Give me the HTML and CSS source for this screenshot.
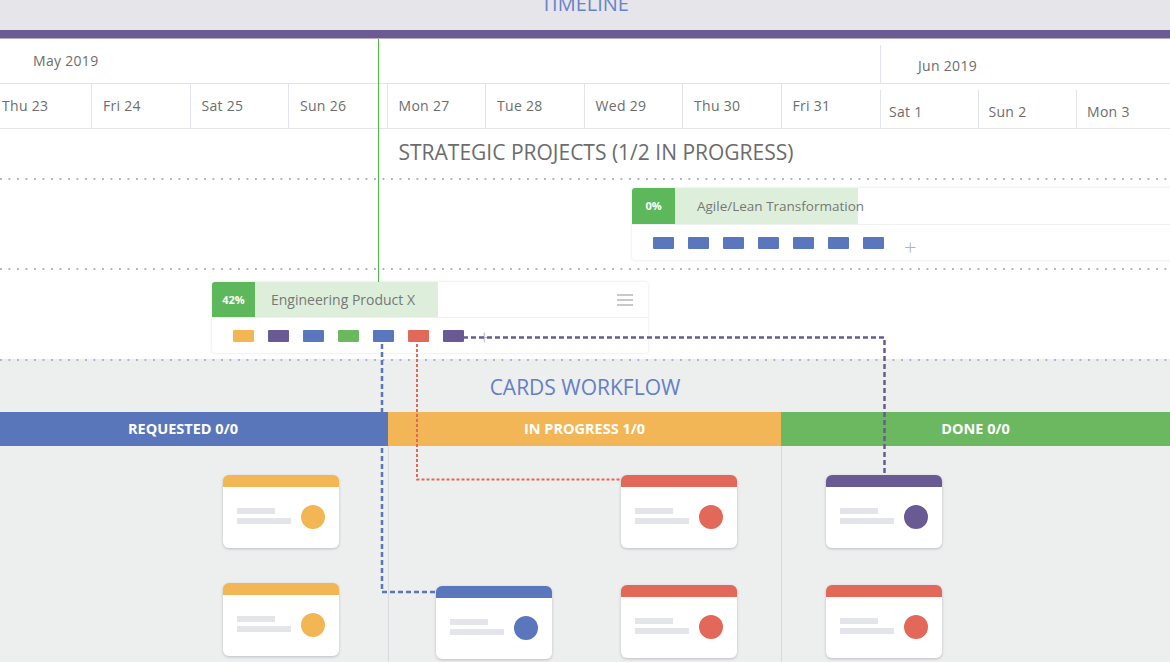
FILE: index.html
```html
<!DOCTYPE html>
<html lang="en">
<head>
<meta charset="utf-8">
<title>Timeline</title>
<link rel="stylesheet" href="styles.css">
</head>
<body>
<div class="page">
  <header class="topbar"><div class="topbar-title">TIMELINE</div></header>
  <div class="accent"></div>

  <section class="timeline">
    <div class="today"></div>
    <div class="cal">
      <div class="month may">
        <div class="mlabel">May 2019</div>
        <div class="days">
          <div class="day first">Thu 23</div>
          <div class="day">Fri 24</div>
          <div class="day">Sat 25</div>
          <div class="day">Sun 26</div>
          <div class="day">Mon 27</div>
          <div class="day">Tue 28</div>
          <div class="day">Wed 29</div>
          <div class="day">Thu 30</div>
          <div class="day">Fri 31</div>
        </div>
      </div>
      <div class="month jun">
        <div class="mlabel">Jun 2019</div>
        <div class="days">
          <div class="day">Sat 1</div>
          <div class="day">Sun 2</div>
          <div class="day">Mon 3</div>
        </div>
      </div>
    </div>

    <h2 class="lane-title">STRATEGIC PROJECTS (1/2 IN PROGRESS)</h2>

    <div class="lane lane-a">
      <div class="project wide">
        <div class="project-head">
          <div class="pct">0%</div>
          <div class="progress">Agile/Lean Transformation</div>
        </div>
        <div class="project-body">
          <span class="chip blue"></span><span class="chip blue"></span><span class="chip blue"></span><span class="chip blue"></span><span class="chip blue"></span><span class="chip blue"></span><span class="chip blue"></span>
          <span class="plus">+</span>
        </div>
      </div>
    </div>

    <div class="lane lane-b">
      <div class="project narrow">
        <div class="project-head">
          <div class="pct">42%</div>
          <div class="progress">Engineering Product X</div>
          <div class="menu"><span></span><span></span><span></span></div>
        </div>
        <div class="project-body">
          <span class="chip orange"></span><span class="chip purple"></span><span class="chip blue"></span><span class="chip green"></span><span class="chip blue"></span><span class="chip red"></span><span class="chip purple"></span>
          <span class="plus">+</span>
        </div>
      </div>
    </div>
  </section>

  <section class="workflow">
    <h2 class="wf-title">CARDS WORKFLOW</h2>
    <div class="wf-heads">
      <div class="wf-head requested">REQUESTED 0/0</div>
      <div class="wf-head inprogress">IN PROGRESS 1/0</div>
      <div class="wf-head done">DONE 0/0</div>
    </div>
    <div class="wf-cols">
      <div class="wf-col col-req">
        <div class="card orange r1 c1"><span class="l1"></span><span class="l2"></span><span class="dot"></span></div>
        <div class="card orange r2 c1"><span class="l1"></span><span class="l2"></span><span class="dot"></span></div>
      </div>
      <div class="wf-col col-prog">
        <div class="card blue r2 c1 low"><span class="l1"></span><span class="l2"></span><span class="dot"></span></div>
        <div class="card red r1 c2"><span class="l1"></span><span class="l2"></span><span class="dot"></span></div>
        <div class="card red r2 c2"><span class="l1"></span><span class="l2"></span><span class="dot"></span></div>
      </div>
      <div class="wf-col col-done">
        <div class="card purple r1 c1"><span class="l1"></span><span class="l2"></span><span class="dot"></span></div>
        <div class="card red r2 c1"><span class="l1"></span><span class="l2"></span><span class="dot"></span></div>
      </div>
    </div>
  </section>

  <svg class="links" width="1170" height="663" viewBox="0 0 1170 663">
    <path d="M463 337.5 H884.5 V487" fill="none" stroke="#6a5a94" stroke-width="2.5" stroke-dasharray="5 3"/>
    <path d="M382 344 V592 H435" fill="none" stroke="#5a76bd" stroke-width="2.5" stroke-dasharray="5 3"/>
    <path d="M417 344 V479.5 H620" fill="none" stroke="#e2685a" stroke-width="2" stroke-dasharray="3 2"/>
  </svg>
</div>
</body>
</html>
```
FILE: styles.css
```css
* { box-sizing: border-box; }
html, body { margin: 0; padding: 0; }
body {
  font-family: "Open Sans", "Noto Sans", sans-serif;
  color: #666;
  background: #fff;
  overflow: hidden;
}
.page {
  position: relative;
  width: 1170px;
  height: 663px;
  overflow: hidden;
}

/* top header */
.topbar {
  height: 30px;
  background: #e5e5ea;
  overflow: hidden;
  text-align: center;
}
.topbar-title {
  margin-top: -8px;
  line-height: 24px;
  font-size: 20px;
  color: #6783c8;
}
.accent {
  height: 9px;
  background: #6c5b93;
  border-bottom: 1px solid #b6acc8;
}

/* timeline */
.timeline {
  position: relative;
  background: #fff;
}
.today {
  position: absolute;
  left: 378px;
  top: 0;
  height: 245px;
  width: 1px;
  background: #4fb847;
}
.cal {
  display: flex;
  height: 90px;
}
.month.may { width: 880px; flex: none; }
.month.jun { flex: 1; }
.mlabel {
  height: 45px;
  border-bottom: 1px solid #e3e4ea;
  font-size: 14px;
  line-height: 44px;
  letter-spacing: 0.3px;
  color: #6d6d6d;
}
.may .mlabel { padding-left: 33px; }
.jun .mlabel {
  margin-top: 6px;
  height: 39px;
  line-height: 42px;
  padding-left: 37px;
  border-left: 1px solid #e3e4ea;
}
.days {
  display: flex;
  height: 45px;
  border-bottom: 1px solid #e3e4ea;
}
.day {
  flex: none;
  width: 98.5px;
  border-right: 1px solid #e3e4ea;
  padding-left: 11px;
  font-size: 14px;
  letter-spacing: 0.3px;
  line-height: 43px;
  color: #6d6d6d;
}
.day.first { width: 92px; padding-left: 2px; }
.may .day:last-child { border-right: none; }
.jun .day {
  margin-top: 6px;
  height: 38px;
  line-height: 44px;
  padding-left: 10px;
}
.jun .day:first-child { border-left: 1px solid #e3e4ea; padding-left: 8px; }

.lane-title {
  margin: 0;
  height: 51px;
  padding-left: 22px;
  text-align: center;
  font-weight: 400;
  font-size: 21px;
  line-height: 47px;
  color: #6c6c6c;
  background: linear-gradient(to right, #a9b2db 2px, transparent 2px) repeat-x left bottom / 8.5px 2px;
}
.lane {
  height: 90px;
  background: linear-gradient(to right, #a9b2db 2px, transparent 2px) repeat-x left bottom / 8.5px 2px;
}
.lane-a { padding: 8px 0 0 632px; }
.lane-b { padding: 12px 0 0 212px; height: 89px; background: none; }

.project {
  position: relative;
  z-index: 1;
  background: #fff;
  border-radius: 3px;
  box-shadow: 0 0 3px rgba(60, 60, 90, 0.16);
}
.project.wide { width: 560px; }
.project.narrow { width: 436px; }
.project-head {
  display: flex;
  align-items: stretch;
  height: 37px;
  border-bottom: 1px solid #f0f0f3;
}
.narrow .project-head { height: 36px; }
.pct {
  width: 43px;
  flex: none;
  background: #5cb85a;
  color: #fff;
  font-weight: 700;
  font-size: 11px;
  text-align: center;
  line-height: 36px;
  border-top-left-radius: 3px;
}
.progress {
  width: 183px;
  flex: none;
  background: #ddefda;
  color: #777;
  font-size: 13.5px;
  line-height: 36px;
  padding-left: 22px;
  white-space: nowrap;
}
.narrow .progress { padding-left: 16px; font-size: 14px; }
.menu {
  margin-left: auto;
  margin-right: 15px;
  display: flex;
  flex-direction: column;
  justify-content: center;
  gap: 3px;
}
.menu span {
  display: block;
  width: 16px;
  height: 2px;
  background: #c9c9cc;
}
.project-body {
  display: flex;
  align-items: center;
  gap: 14px;
  height: 35px;
  padding-left: 21px;
}
.chip {
  display: block;
  width: 21px;
  height: 12px;
  border-radius: 1px;
}
.chip.blue { background: #5a76bd; }
.chip.orange { background: #f2b655; }
.chip.purple { background: #6a5a94; }
.chip.green { background: #6cb85f; }
.chip.red { background: #e2685a; }
.plus {
  font-size: 22px;
  line-height: 20px;
  color: #b5b5b8;
  font-weight: 300;
  margin-left: 6px;
  margin-top: 6px;
}
.narrow .plus { margin-top: 0; margin-left: 0; }

/* workflow */
.workflow {
  height: 303px;
  background: #edeeee;
  background-image: linear-gradient(to right, #a9b2db 2px, transparent 2px);
  background-repeat: repeat-x;
  background-size: 8.5px 2px;
  background-position: left top;
}
.wf-title {
  margin: 0;
  height: 53px;
  padding-top: 14px;
  text-align: center;
  font-weight: 400;
  font-size: 21px;
  line-height: 28px;
  color: #6380c7;
}
.wf-heads {
  display: grid;
  grid-template-columns: 388px 393px 1fr;
  height: 34px;
}
.wf-head {
  color: #fff;
  font-weight: 700;
  font-size: 14.5px;
  line-height: 34px;
  text-align: center;
}
.requested { background: #5a76bb; padding-right: 22px; }
.inprogress { background: #f2b656; }
.done { background: #6cb860; }
.wf-cols {
  display: grid;
  grid-template-columns: 388px 393px 1fr;
  height: 216px;
}
.wf-col {
  display: grid;
  grid-template-columns: 116px 116px;
  grid-template-rows: 73px 73px;
  row-gap: 37px;
  padding-top: 29px;
  align-content: start;
}
.col-req { padding-left: 223px; }
.col-prog {
  padding-left: 47px;
  column-gap: 69px;
  border-left: 1px solid #d9dadf;
}
.col-done {
  padding-left: 44px;
  border-left: 1px solid #d9dadf;
}
.r1 { grid-row: 1; }
.r2 { grid-row: 2; }
.c1 { grid-column: 1; }
.c2 { grid-column: 2; }
.card {
  position: relative;
  width: 116px;
  height: 73px;
  background: #fff;
  border-radius: 6px;
  border-top: 12px solid;
  box-shadow: 0 1px 3px rgba(70, 70, 90, 0.28);
}
.card.low { margin-top: 1px; }
.col-req .r2 { margin-top: -2px; }
.card.orange { border-top-color: #f2b655; }
.card.blue { border-top-color: #5a76bd; }
.card.red { border-top-color: #e2685a; }
.card.purple { border-top-color: #6a5a94; }
.card .l1, .card .l2 {
  position: absolute;
  left: 14px;
  height: 6px;
  background: #e4e5ea;
}
.card .l1 { top: 21px; width: 38px; }
.card .l2 { top: 31px; width: 54px; }
.card .dot {
  position: absolute;
  left: 78px;
  top: 18px;
  width: 24px;
  height: 24px;
  border-radius: 50%;
}
.orange .dot { background: #f2b655; }
.blue .dot { background: #5a76bd; }
.red .dot { background: #e2685a; }
.purple .dot { background: #6a5a94; }

/* connectors overlay */
.links {
  position: absolute;
  left: 0;
  top: 0;
  pointer-events: none;
  z-index: 5;
}
```
